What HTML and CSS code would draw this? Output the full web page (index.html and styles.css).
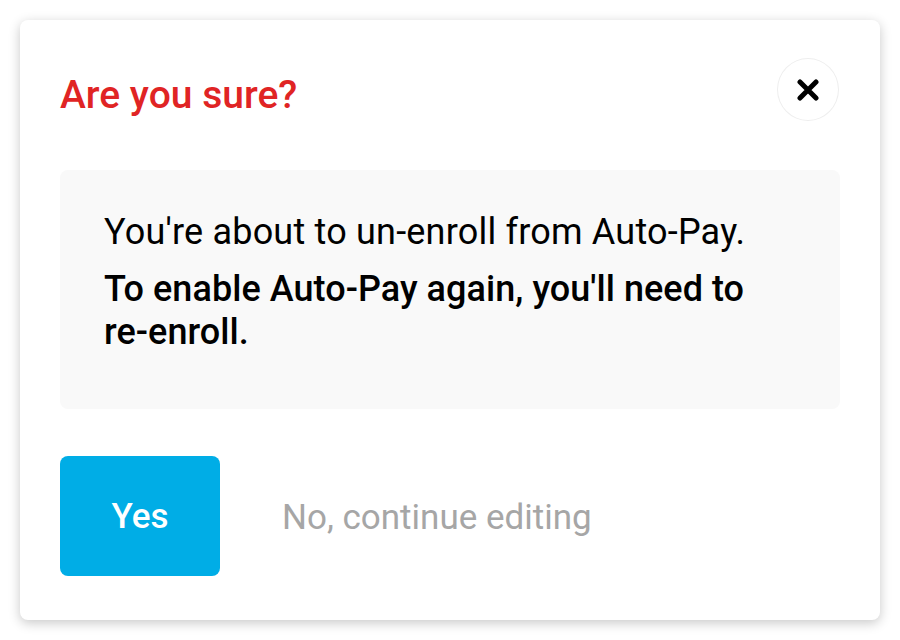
FILE: index.html
```html
<!DOCTYPE html>
<html lang="en">
<head>
<meta charset="utf-8">
<link rel="stylesheet" href="styles.css">
</head>
<body>
<div class="modal">
  <div class="modal-header">
    <h1 class="title">Are you sure?</h1>
    <button class="close" aria-label="Close">
      <svg width="22" height="22" viewBox="0 0 22 22"><path d="M3 3 L19 19 M19 3 L3 19" stroke="#000" stroke-width="5" stroke-linecap="round"/></svg>
    </button>
  </div>
  <div class="message">
    <p class="line">You're about to un-enroll from Auto-Pay.</p>
    <p class="line strong">To enable Auto-Pay again, you'll need to re-enroll.</p>
  </div>
  <div class="actions">
    <button class="btn-yes">Yes</button>
    <button class="btn-no">No, continue editing</button>
  </div>
</div>
</body>
</html>
```
FILE: styles.css
```css
* { box-sizing: border-box; }
html, body { margin: 0; padding: 0; background: #fff; }
body {
  font-family: Roboto, "Liberation Sans", sans-serif;
  padding: 20px;
}
.modal {
  width: 860px;
  height: 600px;
  background: #fff;
  border-radius: 8px;
  box-shadow: 0 3px 12px rgba(0,0,0,0.22);
  padding: 38px 40px 0 40px;
}
.modal-header {
  display: flex;
  align-items: flex-start;
  justify-content: space-between;
  height: 64px;
}
.title {
  margin: 14px 0 0 0;
  color: #e02424;
  font-size: 39px;
  line-height: 46px;
  font-weight: 500;
}
.close {
  width: 62px;
  height: 63px;
  border-radius: 50%;
  border: 1px solid #eeeeee;
  background: #fff;
  display: flex;
  align-items: center;
  justify-content: center;
  padding: 0;
  margin-right: 1px;
}
.message {
  margin-top: 48px;
  background: #f9f9f9;
  border-radius: 8px;
  height: 239px;
  padding: 41px 44px 0 44px;
}
.line {
  margin: 0;
  font-size: 36px;
  letter-spacing: 0.2px;
  line-height: 43px;
  color: #000;
}
.strong {
  font-weight: 500;
  letter-spacing: 0.05px;
  margin-top: 14px;
}
.actions {
  display: flex;
  align-items: center;
  margin-top: 47px;
}
.btn-yes {
  width: 160px;
  height: 120px;
  border: none;
  border-radius: 8px;
  background: #00ade6;
  color: #fff;
  font-family: inherit;
  font-size: 35px;
  font-weight: 500;
}
.btn-no {
  border: none;
  background: none;
  font-family: inherit;
  font-size: 35px;
  color: #a6a6a6;
  margin-left: 62px;
  padding: 3px 0 0 0;
}
```
